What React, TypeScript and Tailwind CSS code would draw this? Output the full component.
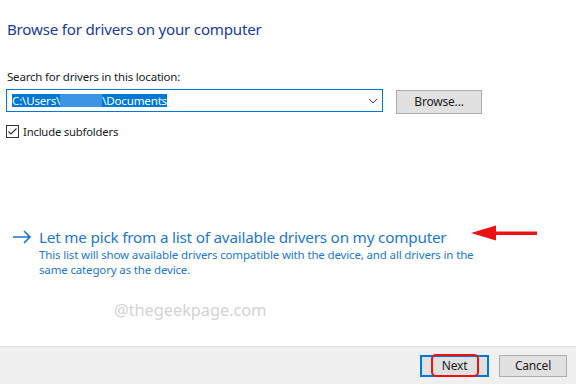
import React from 'react';

const font = { fontFamily: '"Noto Sans", "Open Sans", sans-serif' };

const RedArrow = () => (
  <svg width="66" height="18" viewBox="0 0 66 18" className="shrink-0">
    <polygon points="0,8 25,0.5 25,15.5" fill="#ee1111" />
    <rect x="22" y="6.5" width="44" height="3.5" fill="#ee1111" />
  </svg>
);

export default function App() {
  return (
    <div className="flex h-[384px] w-[576px] flex-col bg-white text-[#1b1b1b]" style={font}>
      <div className="flex-1 pl-[7px]">
        <h1 className="mt-[18px] text-[15.1px] leading-[22px] tracking-[-0.2px] text-[#1a3a9c]">
          Browse for drivers on your computer
        </h1>

        <div className="mt-[29px] text-[11.5px] leading-[16px] tracking-[-0.2px]">Search for drivers in this location:</div>

        <div className="mt-[4px] flex items-start">
          <div className="-ml-px flex h-[23px] w-[377px] items-center border border-[#0078d7] pl-[5px] pr-[4px]">
            <span className="flex h-[13px] items-center bg-[#0078d7] text-[11.6px] leading-[13px] tracking-[-0.2px] text-white">
              C:\Users\<span className="inline-block h-[13px] w-[42px] bg-[#3b94e4]" />\Documents
            </span>
            <svg width="10" height="6" viewBox="0 0 10 6" className="ml-auto">
              <path d="M1 1 L5 5 L9 1" fill="none" stroke="#444" strokeWidth="1" />
            </svg>
          </div>
          <button className="ml-[13px] mt-[1px] h-[24px] w-[86px] border border-[#adadad] bg-[#e1e1e1] text-[12px] tracking-[-0.2px]">
            Browse...
          </button>
        </div>

        <label className="mt-[11px] flex items-center text-[11.3px] leading-[13px] tracking-[-0.2px]">
          <span className="-ml-px flex h-[13px] w-[13px] items-center justify-center border border-[#333]">
            <svg width="11" height="11" viewBox="0 0 11 11">
              <path d="M1.5 5.5 L4 8 L9.5 2.5" fill="none" stroke="#333" strokeWidth="1.2" />
            </svg>
          </span>
          <span className="ml-[4px]">Include subfolders</span>
        </label>

        <div className="mt-[88px] flex">
          <svg width="19" height="14" viewBox="0 0 19 14" className="ml-[6px] mt-[4px] shrink-0">
            <path d="M0 7 H17 M11 1 L17 7 L11 13" fill="none" stroke="#1874cd" strokeWidth="1.6" />
          </svg>
          <div className="ml-[7px]">
            <div className="flex items-center">
              <span className="text-[15.25px] leading-[22px] tracking-[-0.2px] text-[#1b78d0]">
                Let me pick from a list of available drivers on my computer
              </span>
              <span className="ml-[25px] mt-[-6px]">
                <RedArrow />
              </span>
            </div>
            <p className="-mt-px w-[445px] text-[11.5px] leading-[15px] tracking-[-0.15px] text-[#1b78d0]">
              This list will show available drivers compatible with the device, and all drivers in the same category as the device.
            </p>
          </div>
        </div>

        <div className="mt-[23px] pl-[107px] text-[16.3px] leading-[20px] text-[#d3d3d3]">@thegeekpage.com</div>
      </div>

      <div className="flex h-[38px] items-center justify-end gap-[10px] border-t border-[#dfdfdf] bg-[#f0f0f0] pr-[9px]">
        <button className="flex h-[22px] w-[69px] items-center justify-center border-2 border-[#0078d7] bg-[#e1e1e1]">
          <span className="relative text-[12px] tracking-[-0.2px]">
            Next
            <span className="absolute -left-[11px] -right-[12px] -top-[3px] -bottom-[2px] rounded-[5px] border-2 border-[#ee1111]" />
          </span>
        </button>
        <button className="h-[22px] w-[68px] border border-[#adadad] bg-[#e1e1e1] text-[12px] tracking-[-0.2px]">
          Cancel
        </button>
      </div>
    </div>
  );
}
